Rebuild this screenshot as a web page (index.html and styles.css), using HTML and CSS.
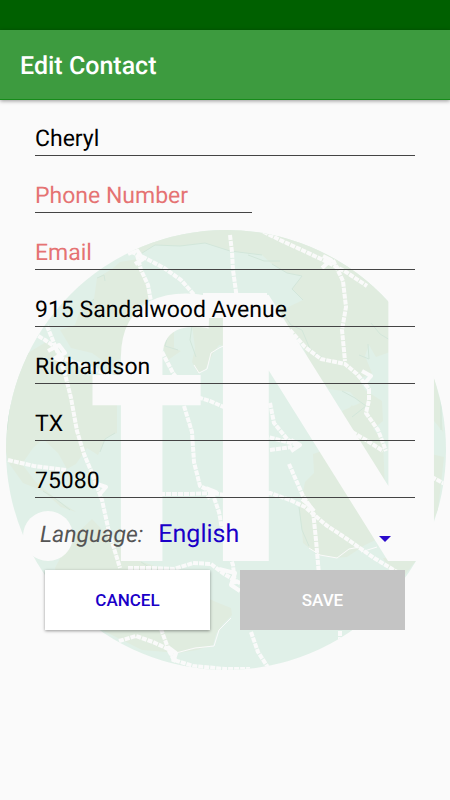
FILE: index.html
```html
<!DOCTYPE html>
<html lang="en">
<head>
<meta charset="utf-8">
<meta name="viewport" content="width=device-width, initial-scale=1">
<title>Edit Contact</title>
<link rel="stylesheet" href="styles.css">
</head>
<body>
<div class="status-bar"></div>
<header class="app-bar"><h1>Edit Contact</h1></header>
<main>
  <svg class="watermark" viewBox="0 230 450 442" aria-hidden="true">
    <defs><clipPath id="globe"><circle cx="226" cy="450" r="220"/></clipPath></defs>
    <g clip-path="url(#globe)">
      <rect class="water" y="230" width="450" height="442"/>
      <g class="land">
        <path d="M130 245L170 230H310L400 310V365L390 352L376 357L369 345L365 356L372 373L359 379L365 390L382 401L383 421L372 430L360 421L348 430L342 411L360 403L350 392L329 389L313 370L300 340L283 323L282 310L303 300L292 289L302 276L287 273L272 264L262 255L230 251L205 243L180 246L155 245L139 255Z"/>
        <path d="M120 262L138 259L145 276L149 299L134 308L127 330L120 359L106 363L92 353L71 348L60 330L75 325L80 310L94 299L97 278L112 269Z"/>
        <path d="M0 420L28 353L46 342L65 354L76 374L100 377L117 380V433L106 438L98 455L87 448L76 464L67 469L58 453L43 439L33 448L22 464L35 481L56 499L76 512L61 507L43 491L23 483L8 462Z"/>
        <path d="M192 325L200 318L215 315L230 318V347L219 345L213 353L210 360L205 370L198 373L192 362L195 348Z"/>
        <path d="M162 345L168 335L174 331L174 348L181 351L168 360Z"/>
        <path d="M313 454L325 450L390 533L365 545L347 557L335 558L318 555L303 543L302 530L299 510L305 482L314 473Z"/>
        <path d="M352 405L383 440L385 490L340 420Z"/>
        <path d="M427 350L440 400L443 432L434 421L427 430ZM427 453L444 457L438 510L427 535Z"/>
        <path d="M69 541L92 519L115 543L137 560L160 568L180 585L216 602L231 608L232 615L223 624L216 634L213 645L197 650L178 653L142 650L98 628L61 594L55 568Z"/>
        <path d="M383 558H418L397 585Z"/>
      </g>
      <g class="coast">
        <path d="M139 255L155 245L180 246L205 243L230 251L262 255M272 264L287 273L302 276L292 289L303 300M281 310L291 325L302 330L310 349L327 361M97 278L104 275L105 281M94 299L80 310M371 323L380 334L390 340M368 344L369 359L359 355M342 391L355 398L366 406L352 417M43 491L56 499L70 510M115 433L105 439L100 452M299 507L302 530L309 546M141 562L152 569L165 571"/>
        <path d="M248 255L264 261L280 261M25 353L12 385L7 430M441 382L441 430M168 335L165 346L178 350M192 325L190 340L196 357"/>
      </g>
      <path class="shore" d="M230 343L219 348L211 353L207 369L199 373L194 365M309 548L320 555L337 558L349 549L360 547M176 653L195 648L214 646L219 630L231 618M361 552L377 547"/>
      <g class="rope">
        <path d="M120 247L143 257L164 268L181 280L197 298"/>
        <path d="M137 255L141 270L148 285L152 307L163 333L161 350L173 373L190 395L210 401L226 408"/>
        <path d="M230 235L232 252L233 270L237 299"/>
        <path d="M258 229L280 240L304 251L323 260L346 272L367 286"/>
        <path d="M333 260L343 281L346 307L342 330L345 361"/>
        <path d="M290 330L305 347L321 359L345 364L357 374L369 389L369 400L366 413L378 430L386 451"/>
        <path d="M352 432L366 440L383 451"/>
        <path d="M28 330L45 340L55 347L62 358L90 368L116 378"/>
        <path d="M47 326L56 348L65 374L71 398L77 431L84 454L92 473L102 500L109 532L120 568"/>
        <path d="M184 406L192 432L194 462L200 486L212 492L219 512L224 540L233 565L235 585"/>
        <path d="M160 494L190 494L212 493L231 496L270 493L290 500L305 507L326 525L347 539L374 558L402 575"/>
        <path d="M270 403L274 423L288 440L298 445L268 437M270 450L292 447"/>
        <path d="M289 464L303 496L313 511L316 540L319 575"/>
        <path d="M8 460L34 466L66 470"/>
        <path d="M128 568L151 568L174 569L193 563L211 564L224 574L243 585"/>
        <path d="M119 641L136 636L153 642L168 649L174 660L193 666L225 669L250 669"/>
        <path d="M161 629L168 648L175 660M251 632L258 652L271 672M340 625V642M426 474L445 484"/>
      </g>
      <g class="knot">
        <path d="M128 254L137 250L143 259L135 264M48 351L59 345L65 353L55 358L62 361M323 256L331 260L322 268M362 371L371 376L364 384M97 484L106 487L99 495M206 488L216 492L207 498M291 440L300 445L291 451M302 499L309 505L314 511M219 569L235 573L231 585L240 591M168 647L176 653L173 662"/>
      </g>
    </g>
    <circle class="paper" cx="48" cy="536" r="25"/>
    <rect class="paper" x="203" y="293" width="64" height="25"/>
    <text class="paper mark mark-f" x="85" y="561">f</text>
    <text class="paper mark mark-n" x="196" y="561">N</text>
  </svg>
  <form class="contact-form">
    <input class="field" type="text" aria-label="Name" value="Cheryl">
    <input class="field field-phone" type="tel" aria-label="Phone Number" placeholder="Phone Number">
    <input class="field" type="email" aria-label="Email" placeholder="Email">
    <input class="field" type="text" aria-label="Street" value="915 Sandalwood Avenue">
    <input class="field" type="text" aria-label="City" value="Richardson">
    <input class="field" type="text" aria-label="State" value="TX">
    <input class="field" type="text" aria-label="ZIP code" value="75080">
    <div class="language">
      <label for="language">Language:</label>
      <div class="picker">
        <select id="language"><option>English</option></select>
        <svg class="arrow" viewBox="0 0 12 6" aria-hidden="true"><path d="M0 0H12L6 6Z"/></svg>
      </div>
    </div>
    <div class="actions">
      <button class="cancel" type="button">CANCEL</button>
      <button class="save" type="submit" disabled>SAVE</button>
    </div>
  </form>
</main>
</body>
</html>
```

FILE: styles.css
```css
* { box-sizing: border-box; }

body {
  margin: 0;
  min-height: 100vh;
  background: #fafafa;
  color: #000;
  font-family: Roboto, "Liberation Sans", sans-serif;
  text-rendering: geometricPrecision;
}

.status-bar { height: 30px; background: #006000; }

.app-bar {
  position: relative;
  display: flex;
  align-items: center;
  height: 70px;
  padding: 4px 20px 0;
  background: #3d9b3f;
  border-bottom: 1px solid #168b19;
  box-shadow: 0 1px 4px rgba(0, 0, 0, .4);
}

h1 {
  margin: 0;
  color: #fff;
  font-size: 25px;
  font-weight: 500;
}

main { position: relative; }

.watermark {
  position: absolute;
  top: 130px;
  left: 0;
  width: 100%;
}

.water { fill: #e0f0e8; }
.land { fill: #e0ecdf; }
.coast { fill: none; stroke: #d2e6da; stroke-width: 1; }
.shore { fill: none; stroke: #fafafa; stroke-width: 1; }
.rope { fill: none; stroke: #fafafa; stroke-width: 4; stroke-dasharray: 5 1; stroke-linejoin: round; }
.knot { fill: none; stroke: #fafafa; stroke-width: 4; stroke-linejoin: round; }
.paper { fill: #fafafa; }
.mark { font-family: Roboto, sans-serif; font-weight: 500; }
.mark-f { font-size: 352px; }
.mark-n { font-size: 374px; }

.contact-form {
  position: relative;
  display: flex;
  flex-direction: column;
  padding: 16px 35px 0;
}

.field {
  width: 100%;
  height: 40px;
  margin: 0 0 17px;
  padding: 6px 0 0;
  border: 0;
  border-bottom: 1px solid #444;
  border-radius: 0;
  background: transparent;
  color: #000;
  font: 23px Roboto, "Liberation Sans", sans-serif;
  text-rendering: inherit;
  outline: 0;
}

.field::placeholder { color: #e57373; opacity: 1; }
.field-phone { width: 57%; }

.language {
  display: flex;
  align-items: center;
  gap: 15px;
  height: 38px;
  padding: 0 5px;
}

.language label {
  color: #555;
  font-size: 23px;
  font-style: italic;
}

.picker { position: relative; flex: 1; }

select {
  width: 100%;
  padding: 0;
  border: 0;
  appearance: none;
  background: transparent;
  color: #1a00c8;
  font: 25px Roboto, "Liberation Sans", sans-serif;
  text-rendering: inherit;
}

.arrow {
  position: absolute;
  top: 16px;
  right: 19px;
  width: 12px;
  height: 6px;
  fill: #2a0acb;
  pointer-events: none;
}

.actions {
  display: flex;
  gap: 30px;
  margin-top: 17px;
  padding: 0 10px;
}

.actions button {
  flex: 1;
  height: 60px;
  border: 0;
  font: 500 17px Roboto, "Liberation Sans", sans-serif;
}

.cancel {
  background: #fff;
  color: #1a00c8;
  box-shadow: 0 1px 3px rgba(0, 0, 0, .4);
}

.save { background: #c4c4c4; color: #fff; }
```
